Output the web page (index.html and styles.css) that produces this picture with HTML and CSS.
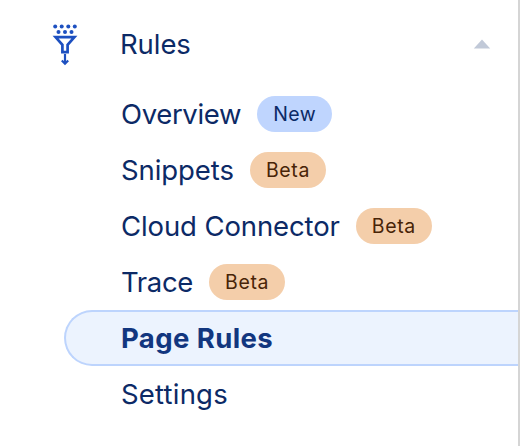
FILE: index.html
```html
<!DOCTYPE html>
<html lang="en">
<head>
<meta charset="utf-8">
<title>Rules</title>
<link rel="stylesheet" href="styles.css">
</head>
<body>
<nav class="sidebar">
  <div class="section">
    <svg class="funnel" width="26" height="44" viewBox="0 0 26 44" fill="none" stroke="#1d50c0" stroke-width="2.7">
      <g fill="#1d50c0" stroke="none">
        <circle cx="3.2" cy="4.5" r="2"/><circle cx="9.7" cy="4.5" r="2"/><circle cx="16.3" cy="4.5" r="2"/><circle cx="22.8" cy="4.5" r="2"/>
        <circle cx="6.5" cy="10" r="2"/><circle cx="13" cy="10" r="2"/><circle cx="19.5" cy="10" r="2"/>
      </g>
      <path d="M3.6 15.2H22.4L15.6 22.8V30.2H10.4V22.8Z"/>
      <path d="M13 32V41M9.8 38.5L13 41.7L16.2 38.5" stroke-width="2.2"/>
    </svg>
    <span class="title">Rules</span>
    <svg class="caret" width="18" height="10" viewBox="0 0 18 10"><path d="M0.8 9.6L9 0.4L17.2 9.6Z" fill="#c1c9d8"/></svg>
  </div>
  <ul class="menu">
    <li class="item"><span class="tight">Overview</span><span class="badge new">New</span></li>
    <li class="item"><span>Snippets</span><span class="badge">Beta</span></li>
    <li class="item"><span class="long">Cloud Connector</span><span class="badge">Beta</span></li>
    <li class="item"><span class="tight">Trace</span><span class="badge">Beta</span></li>
    <li class="item active"><span>Page Rules</span></li>
    <li class="item"><span class="loose">Settings</span></li>
  </ul>
</nav>
</body>
</html>
```
FILE: styles.css
```css
* { box-sizing: border-box; }
body { margin: 0; background: #fff; overflow: hidden; }
.sidebar {
  width: 520px;
  height: 446px;
  border-right: 2px solid #d5d5d5;
  font: 27.5px/56px Inter, "Liberation Sans", sans-serif;
  letter-spacing: -0.08px;
  color: #0c2a66;
}
.section { display: flex; align-items: center; height: 86px; padding: 2px 27px 0 52px; }
.funnel { flex: none; }
.title { margin-left: 42px; }
.caret { margin-left: auto; }
.menu { list-style: none; margin: 0; padding: 0 0 0 64px; }
.item {
  display: flex;
  align-items: center;
  gap: 16px;
  height: 56px;
  padding-left: 57px;
  white-space: nowrap;
}
.tight { letter-spacing: -0.35px; }
.long { letter-spacing: -0.11px; }
.loose { letter-spacing: 0.2px; }
.badge {
  height: 36px;
  padding: 0 16px;
  border-radius: 18px;
  background: #f4ceaa;
  color: #482407;
  font-size: 19.5px;
  line-height: 36px;
  letter-spacing: 0.65px;
}
.badge.new { background: #bfd5fe; color: #0c2a66; letter-spacing: 0.5px; }
.active {
  padding-left: 55px;
  border: 2px solid #bdd4fd;
  border-right: 0;
  border-radius: 28px 0 0 28px;
  background: #ecf3fe;
  color: #12367f;
  font-weight: 700;
  letter-spacing: 0.4px;
}
```
